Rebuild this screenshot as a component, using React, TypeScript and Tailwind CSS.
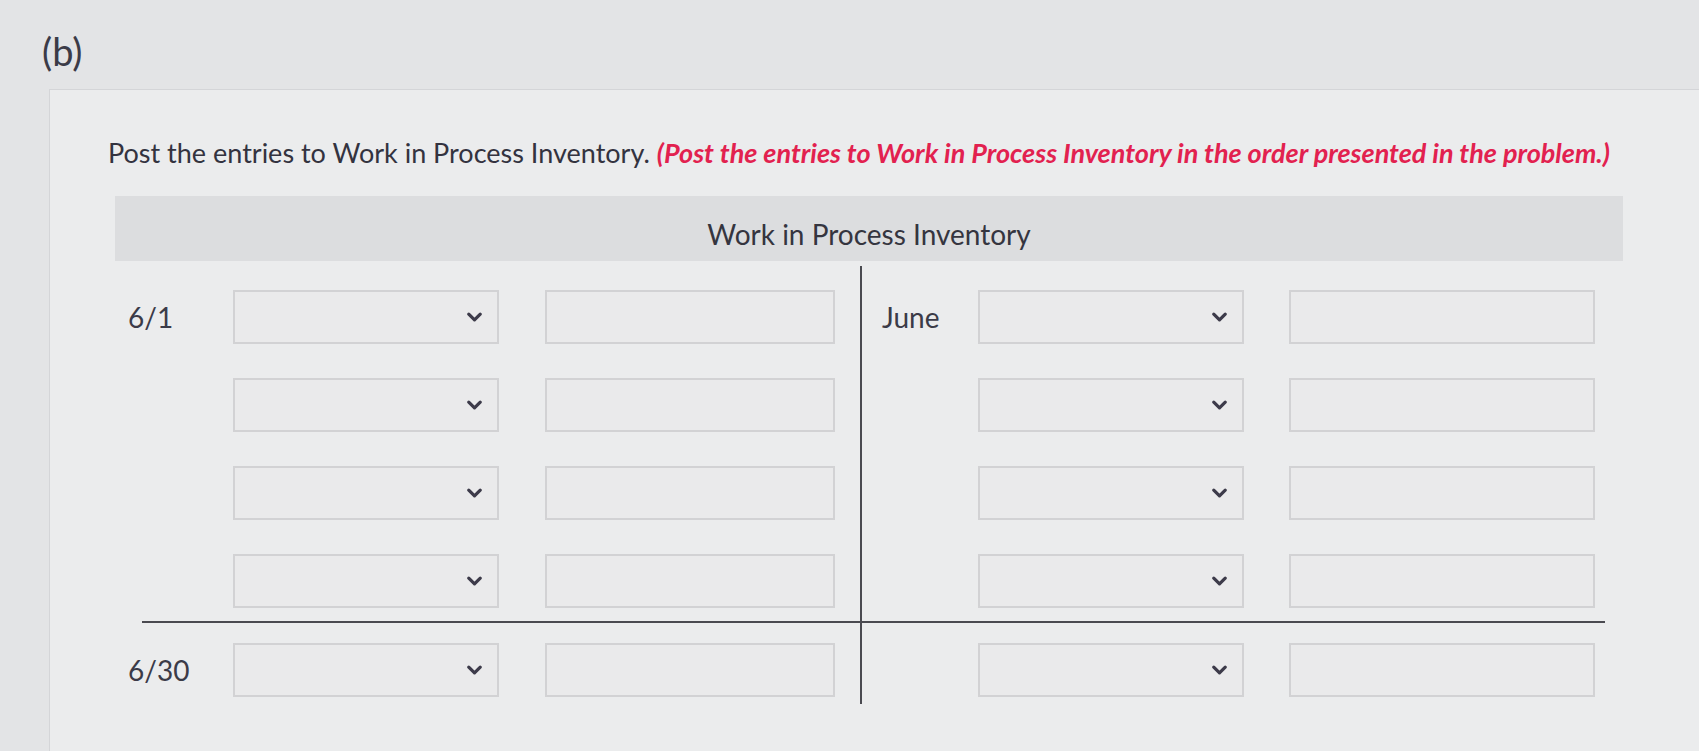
import {ChevronDown} from 'lucide-react'

const font = {fontFamily: 'Lato, "Open Sans", sans-serif'}

function Select() {
  return (
    <div className="relative h-[54px] w-[266px] border-2 border-[#d2d2d4] bg-[#eaeaeb]">
      <ChevronDown
        className="absolute right-[11px] top-1/2 h-[23px] w-[23px] -translate-y-1/2 text-[#3d3b4a]"
        strokeWidth={3.4}
      />
    </div>
  )
}

function Amount({w}: {w: string}) {
  return <div className={`h-[54px] border-2 border-[#d2d2d4] bg-[#eaeaeb] ${w}`} />
}

function Row({label, side}: {label?: string; side: 'dr' | 'cr'}) {
  if (side === 'dr') {
    return (
      <div className="flex items-center">
        <div className="w-[118px] pl-[13px] text-[28px] text-[#3b3b48]">{label}</div>
        <Select />
        <div className="w-[46px]" />
        <Amount w="w-[290px]" />
      </div>
    )
  }
  return (
    <div className="flex items-center">
      <div className="w-[116px] pl-[20px] text-[28px] text-[#3b3b48]">{label}</div>
      <Select />
      <div className="w-[45px]" />
      <Amount w="w-[306px]" />
    </div>
  )
}

export default function App() {
  return (
    <div className="min-h-[751px] w-[1699px] bg-[#e3e4e6] pt-[28px]" style={font}>
      <div className="pl-[42px] text-[38px] leading-[46px] text-[#3b3b48]">(b)</div>

      <div className="ml-[49px] mt-[15px] min-h-[662px] border-l border-t border-[#d4d5d8] bg-[#ebeced] pt-[46px]">
        <p className="pl-[58px] text-[27px] leading-[34px] text-[#33333f]">
          Post the entries to Work in Process Inventory.{' '}
          <span className="font-bold italic text-[#e2214f]">
            (Post the entries to Work in Process Inventory in the order presented in the problem.)
          </span>
        </p>

        <div className="ml-[65px] mt-[26px] w-[1508px]">
          <div className="flex h-[65px] items-center justify-center bg-[#dcdddf] pt-[10px] text-[28px] text-[#35353f]">
            Work in Process Inventory
          </div>

          {/* T-account body */}
          <div className="mt-[5px] grid grid-cols-[747px_761px]">
            <div className="flex flex-col gap-[34px] border-r-2 border-[#4a4a50] pb-[13px] pt-[24px]">
              <Row side="dr" label="6/1" />
              <Row side="dr" />
              <Row side="dr" />
              <Row side="dr" />
            </div>
            <div className="flex flex-col gap-[34px] pb-[13px] pt-[24px]">
              <Row side="cr" label="June" />
              <Row side="cr" />
              <Row side="cr" />
              <Row side="cr" />
            </div>
          </div>

          <div className="ml-[27px] mr-[18px] border-t-2 border-[#4a4a50]" />

          <div className="grid grid-cols-[747px_761px]">
            <div className="border-r-2 border-[#4a4a50] pb-[7px] pt-[20px]">
              <Row side="dr" label="6/30" />
            </div>
            <div className="pb-[7px] pt-[20px]">
              <Row side="cr" />
            </div>
          </div>
        </div>
      </div>
    </div>
  )
}
